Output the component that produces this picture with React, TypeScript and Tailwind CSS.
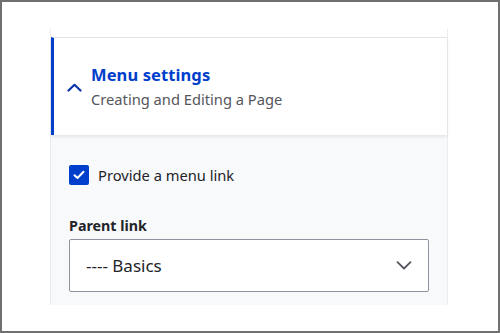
import React from "react";

export default function App() {
  return (
    <div
      className="w-[500px] h-[333px] border-2 border-[#707070] bg-white pl-[48px] pt-[27px] overflow-hidden"
      style={{ fontFamily: '"Noto Sans", "Open Sans", sans-serif' }}
    >
      <div className="w-[398px] h-[276px] border-x border-[#ececf0] pt-2 flex flex-col">
        <div className="relative z-10 h-[98px] border-t border-[#e4e4e8] bg-white border-l-[3px] border-l-[#003ecc] shadow-[0_2px_3px_rgba(0,0,0,0.08)] flex items-center pl-[13px]">
          <svg width="15" height="9" viewBox="0 0 15 9" className="mt-[2px]" fill="none">
            <path d="M1.5 7.5 L7.5 1.8 L13.5 7.5" stroke="#0a34a8" strokeWidth="2.2" strokeLinecap="round" strokeLinejoin="round" />
          </svg>
          <div className="ml-[9px] flex flex-col">
            <div className="text-[16.5px] leading-[22px] font-bold text-[#003ecc] tracking-[0.1px]">Menu settings</div>
            <div className="text-[14.7px] leading-[20px] text-[#55565b] mt-[3px]">Creating and Editing a Page</div>
          </div>
        </div>
        <div className="flex-1 bg-[#f8f9fb] pl-[18px] pr-[17px] pt-[30px]">
          <div className="flex items-center">
            <div className="w-[20px] h-[20px] rounded-[2px] bg-[#003ecc] flex items-center justify-center">
              <svg width="12" height="10" viewBox="0 0 12 10" fill="none">
                <path d="M1.5 5.2 L4.5 8 L10.5 1.8" stroke="white" strokeWidth="2" strokeLinecap="round" strokeLinejoin="round" />
              </svg>
            </div>
            <span className="ml-[9px] text-[14.7px] leading-[20px] text-[#232429]">Provide a menu link</span>
          </div>
          <div className="mt-[31px] text-[14.3px] leading-[20px] font-bold text-[#232429]">Parent link</div>
          <div className="mt-[3px] h-[53px] w-[360px] border border-[#8e929c] rounded-[2px] bg-white flex items-center justify-between pl-[16px] pr-[16px]">
            <span className="text-[17px] text-[#232429]">---- Basics</span>
            <svg width="16" height="9" viewBox="0 0 16 9" fill="none">
              <path d="M1.5 1.2 L8 7.5 L14.5 1.2" stroke="#545560" strokeWidth="1.8" strokeLinecap="round" strokeLinejoin="round" />
            </svg>
          </div>
        </div>
      </div>
    </div>
  );
}
